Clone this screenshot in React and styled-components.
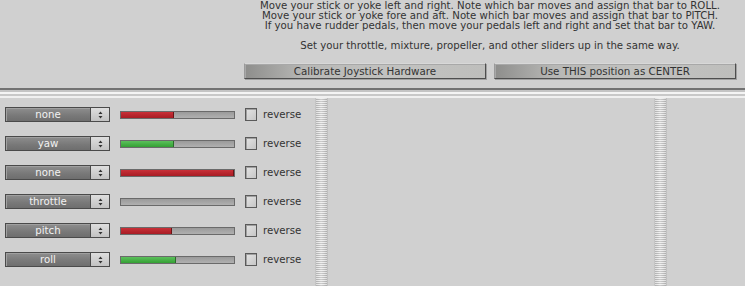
import React from "react";
import styled, { createGlobalStyle } from "styled-components";

const Global = createGlobalStyle`
  html, body { margin: 0; padding: 0; background: #d0d0d0; overflow: hidden; }
  body { font-family: "DejaVu Sans", Verdana, sans-serif; }
`;

const Page = styled.div`
  width: 745px;
  height: 286px;
  background: #d0d0d0;
  display: flex;
  flex-direction: column;
`;

const Header = styled.div`
  height: 88px;
  padding-left: 244px;
  box-sizing: border-box;
`;

const HeaderInner = styled.div`
  width: 492px;
  display: flex;
  flex-direction: column;
  align-items: center;
`;

const Instructions = styled.div`
  font-size: 10.2px;
  line-height: 10px;
  color: #333;
  text-align: center;
  margin-top: 1px;
  white-space: nowrap;
  p { margin: 0; }
  p + p { margin-top: 10px; }
`;

const ButtonRow = styled.div`
  display: flex;
  gap: 8px;
  margin-top: 12px;
  width: 100%;
`;

const Button = styled.button`
  flex: 1;
  height: 16px;
  padding: 0;
  font-family: inherit;
  font-size: 10.3px;
  line-height: 12px;
  color: #333;
  background: linear-gradient(to right, #8e8e8c, #b8b8b6 25%, #c2c2c0 60%, #bebebc);
  border: 1px solid;
  border-color: #d8d8d8 #4e4e4e #4e4e4e #9a9a9a;
  box-shadow: inset 1px 1px 0 #a8a8a8, 1px 1px 0 #a0a0a0;
`;

const Rule = styled.div`
  height: 10px;
  background: linear-gradient(to bottom,
    #727272 0, #727272 2px,
    #c4c4c4 2px, #c4c4c4 4px,
    #f4f4f4 4px, #f4f4f4 6px,
    #c8c8c8 6px, #c8c8c8 8px,
    #f0f0f0 8px, #f0f0f0 10px);
`;

const Body = styled.div`
  flex: 1;
  display: flex;
`;

const Panel = styled.div`
  width: ${(p) => p.$w}px;
  flex: ${(p) => (p.$w ? "none" : 1)};
  display: flex;
  flex-direction: column;
  gap: 14px;
  padding: 9px 0 0 5px;
  box-sizing: border-box;
`;

const Divider = styled.div`
  width: 11px;
  background:
    linear-gradient(to right, rgba(0,0,0,0.06) 0, transparent 3px, rgba(255,255,255,0.25) 5px, transparent 8px, rgba(0,0,0,0.08) 11px),
    repeating-linear-gradient(to bottom, #ececec 0, #ececec 1px, #bcbcbc 1px, #bcbcbc 2px);
  border-left: 1px solid #c4c4c4;
  border-right: 1px solid #c0c0c0;
`;

const Row = styled.div`
  display: flex;
  align-items: center;
  height: 15px;
`;

const Select = styled.div`
  display: flex;
  width: 105px;
  height: 15px;
  border: 1px solid #4a4a4a;
  box-sizing: border-box;
`;

const SelectValue = styled.div`
  flex: 1;
  font-size: 10.2px;
  line-height: 13px;
  color: #f2f2f2;
  text-align: center;
  background: linear-gradient(to bottom, #8e8e8e, #787878 60%, #6e6e6e);
  box-shadow: inset 1px 1px 0 #a0a0a0;
`;

const Stepper = styled.div`
  width: 18px;
  border-left: 1px solid #4a4a4a;
  background: linear-gradient(to bottom, #dedede, #c2c2c2);
  display: flex;
  align-items: center;
  justify-content: center;
`;

const Track = styled.div`
  margin-left: 10px;
  width: 115px;
  height: 8px;
  box-sizing: border-box;
  border: 1px solid #6a6a6a;
  background: linear-gradient(to bottom, #9a9a9a, #b0b0b0);
  display: flex;
`;

const Fill = styled.div`
  height: 100%;
  background: ${(p) =>
    p.$tone === "green"
      ? "linear-gradient(to bottom, #5cc05c, #34a034)"
      : "linear-gradient(to bottom, #c83038, #a81c24)"};
  border-right: 1px solid ${(p) => (p.$tone === "green" ? "#2a6a2a" : "#6a1416")};
  box-sizing: border-box;
`;

const Check = styled.div`
  margin-left: 10px;
  width: 12px;
  height: 13px;
  box-sizing: border-box;
  border: 1px solid #5a5a5a;
  background: linear-gradient(135deg, #e4e4e4, #c6c6c6);
  box-shadow: inset 1px 1px 0 #a0a0a0;
`;

const Label = styled.span`
  margin-left: 6px;
  font-size: 10.2px;
  color: #333;
`;

const Arrows = () => (
  <svg width="5" height="8" viewBox="0 0 5 8">
    <path d="M2.5 0.5 L4.5 3 H0.5 Z M2.5 7.5 L4.5 5 H0.5 Z" fill="#333" />
  </svg>
);

const axes = [
  { name: "none", pct: 47, tone: "red" },
  { name: "yaw", pct: 47, tone: "green" },
  { name: "none", pct: 100, tone: "red" },
  { name: "throttle", pct: 0, tone: "red" },
  { name: "pitch", pct: 45, tone: "red" },
  { name: "roll", pct: 49, tone: "green" },
];

export default function App() {
  return (
    <Page>
      <Global />
      <Header>
        <HeaderInner>
          <Instructions>
            <p>
              Move your stick or yoke left and right. Note which bar moves and assign that bar to ROLL.
              <br />
              Move your stick or yoke fore and aft. Note which bar moves and assign that bar to PITCH.
              <br />
              If you have rudder pedals, then move your pedals left and right and set that bar to YAW.
            </p>
            <p>Set your throttle, mixture, propeller, and other sliders up in the same way.</p>
          </Instructions>
          <ButtonRow>
            <Button>Calibrate Joystick Hardware</Button>
            <Button>Use THIS position as CENTER</Button>
          </ButtonRow>
        </HeaderInner>
      </Header>
      <Rule />
      <Body>
        <Panel $w={315}>
          {axes.map((a, i) => (
            <Row key={i}>
              <Select>
                <SelectValue>{a.name}</SelectValue>
                <Stepper>
                  <Arrows />
                </Stepper>
              </Select>
              <Track>
                {a.pct > 0 && <Fill $tone={a.tone} style={{ width: `${a.pct}%` }} />}
              </Track>
              <Check />
              <Label>reverse</Label>
            </Row>
          ))}
        </Panel>
        <Divider />
        <Panel $w={326} />
        <Divider />
        <Panel />
      </Body>
    </Page>
  );
}
